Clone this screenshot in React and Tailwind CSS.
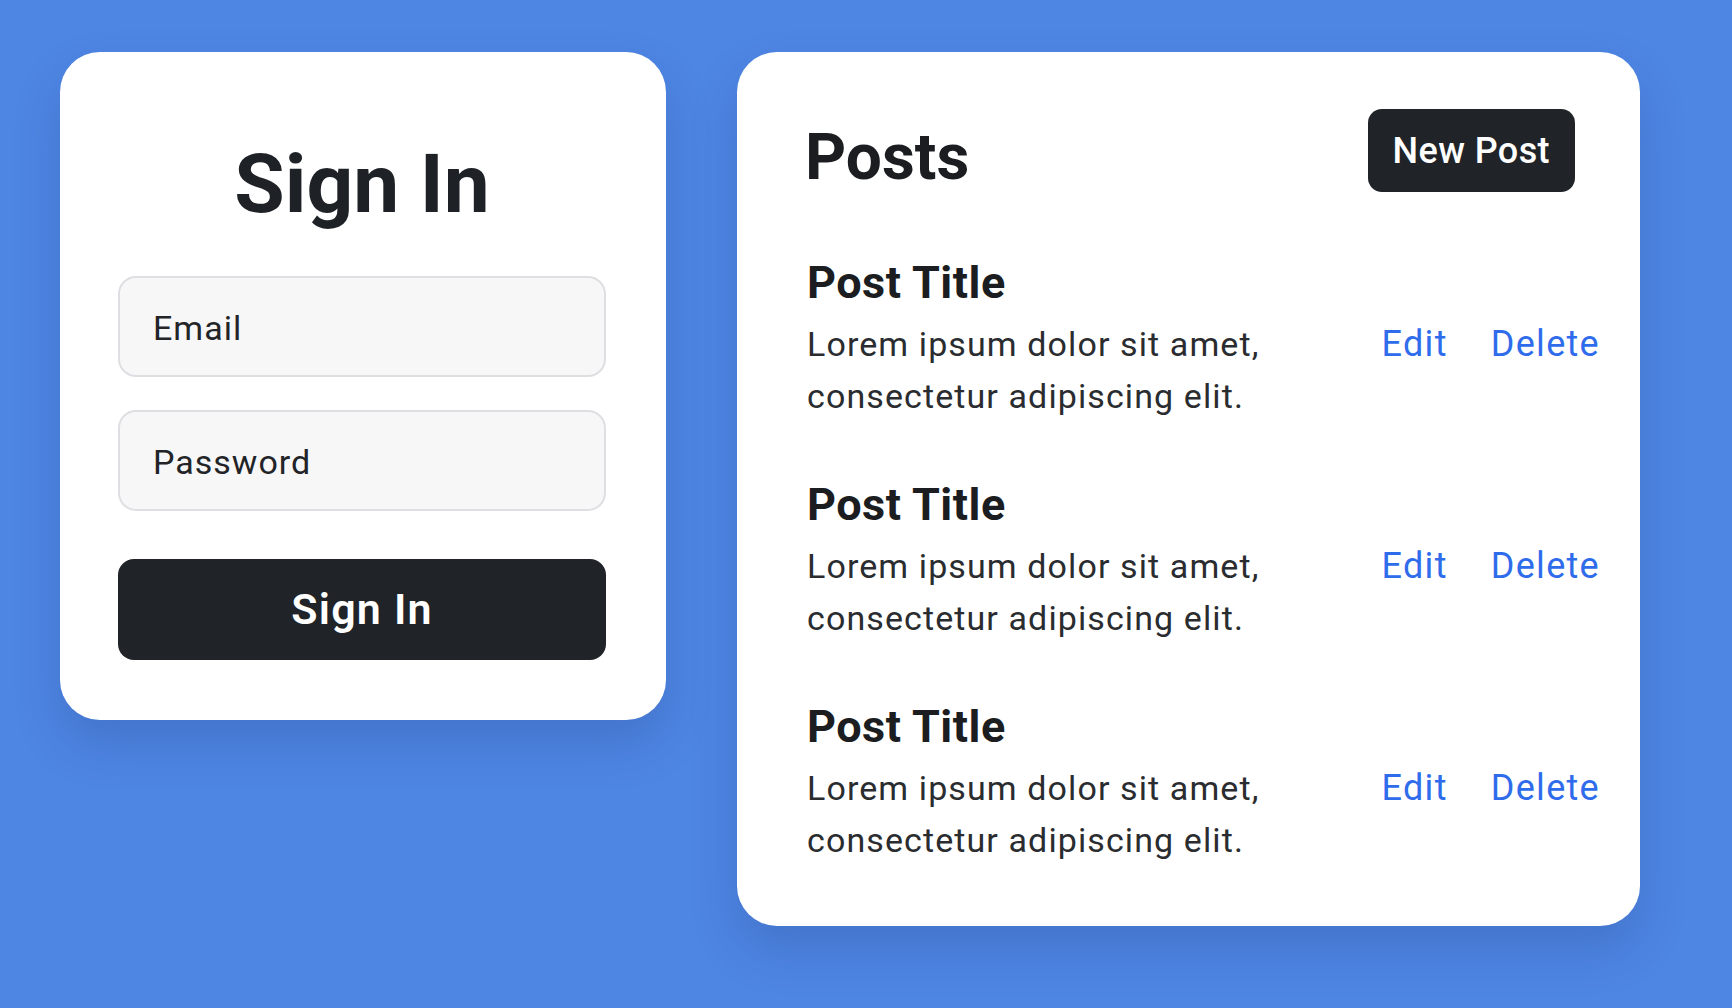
import React from "react";

const font = { fontFamily: "Roboto, 'Noto Sans', sans-serif" };

function Post() {
  return (
    <div className="flex flex-col">
      <h2 className="ml-[2px] text-[45px] leading-none font-bold tracking-[0.5px] text-[#1b1d20]">Post Title</h2>
      <div className="mt-[13px] flex items-start justify-between">
        <p className="ml-[2px] w-[500px] text-[34px] leading-[52px] tracking-[1.1px] text-[#2a2c2f]">
          Lorem ipsum dolor sit amet, consectetur adipiscing elit.
        </p>
        <div className="flex gap-[43px] text-[36px] leading-[52px] tracking-[1.3px] text-[#2f6ceb]">
          <span>Edit</span>
          <span>Delete</span>
        </div>
      </div>
    </div>
  );
}

export default function App() {
  return (
    <div
      className="min-h-screen w-full bg-[#4e86e4] flex items-start gap-[71px] pl-[60px] pt-[52px]"
      style={font}
    >
      <div className="w-[606px] bg-white rounded-[40px] pt-[91px] pb-[60px] pl-[58px] pr-[60px] flex flex-col shadow-[0_24px_48px_rgba(20,40,90,0.18)]">
        <h1 className="text-[82px] leading-none font-bold text-center text-[#1e2227]">Sign In</h1>
        <div className="mt-[51px] h-[101px] rounded-[18px] border-2 border-[#dedfe2] bg-[#f7f7f8] flex items-center pl-[33px] pt-[4px] text-[34px] tracking-[1px] text-[#222427]">
          Email
        </div>
        <div className="mt-[33px] h-[101px] rounded-[18px] border-2 border-[#dedfe2] bg-[#f7f7f8] flex items-center pl-[33px] pt-[4px] text-[34px] tracking-[1px] text-[#222427]">
          Password
        </div>
        <div className="mt-[48px] h-[101px] rounded-[16px] bg-[#202328] flex items-center justify-center text-[43px] font-semibold tracking-[1.2px] text-white">
          Sign In
        </div>
      </div>

      <div className="w-[903px] bg-white rounded-[40px] pt-[57px] pb-[60px] pl-[68px] pr-[40px] flex flex-col shadow-[0_24px_48px_rgba(20,40,90,0.18)]">
        <div className="flex items-start justify-between pr-[25px]">
          <h1 className="mt-[17px] text-[64px] leading-none font-bold text-[#1b1d20]">Posts</h1>
          <div className="h-[83px] px-[25px] rounded-[14px] bg-[#202328] flex items-center text-[36px] font-medium tracking-[0.4px] text-white">
            New Post
          </div>
        </div>
        <div className="mt-[68px] flex flex-col gap-[60px]">
          <Post />
          <Post />
          <Post />
        </div>
      </div>
    </div>
  );
}
